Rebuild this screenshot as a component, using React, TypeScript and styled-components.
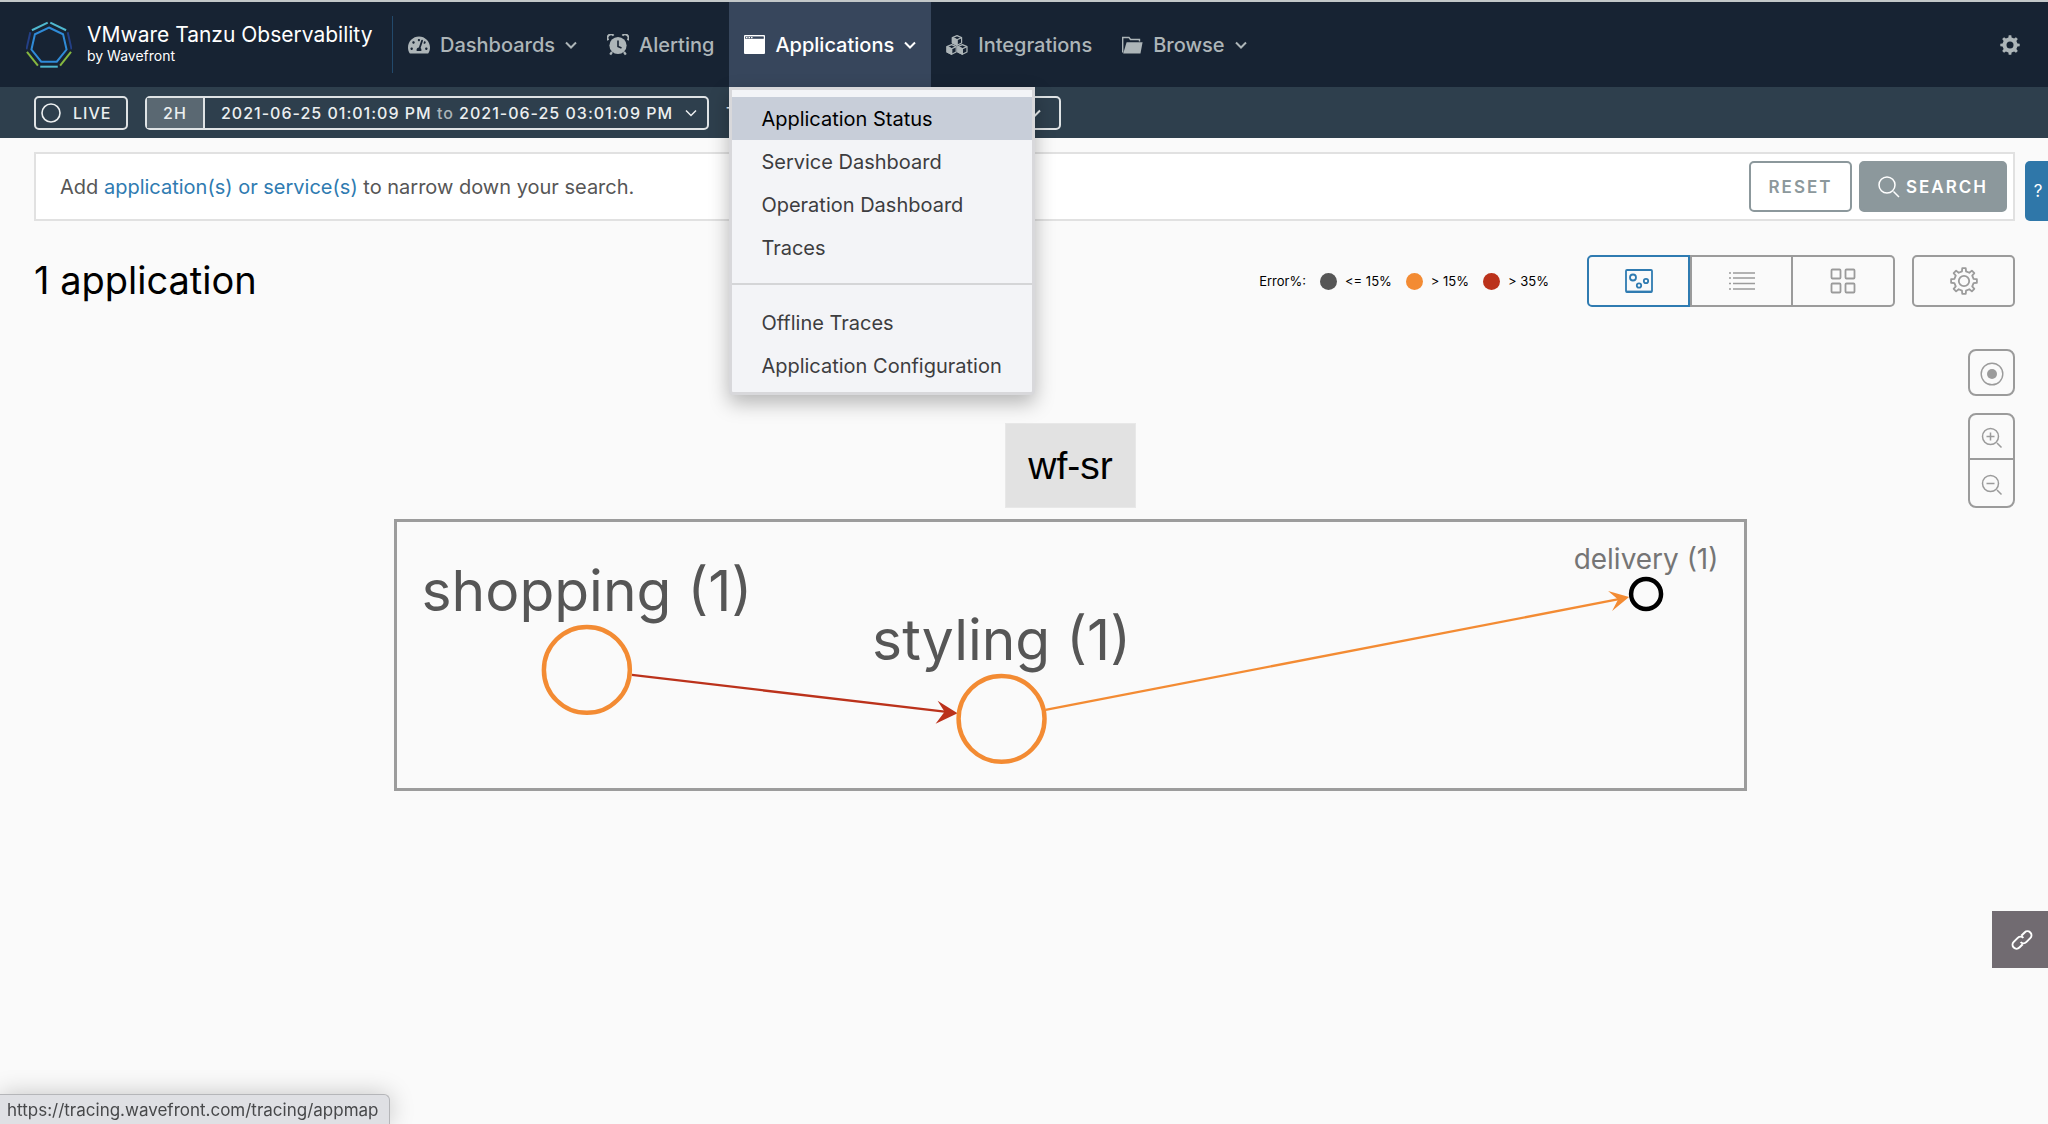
import React from "react";
import styled, { createGlobalStyle, css } from "styled-components";
import { FaTachometerAlt } from "react-icons/fa";

const GlobalStyle = createGlobalStyle`
  *, *::before, *::after { box-sizing: border-box; }
  body {
    margin: 0;
    background: #fafafa;
    color: #565656;
    font-family: Inter, "Open Sans", "Liberation Sans", sans-serif;
    font-size: 20px;
    line-height: 24px;
  }
  button, select {
    font: inherit;
    letter-spacing: inherit;
    color: inherit;
    background: none;
    margin: 0;
    padding: 0;
    cursor: pointer;
  }
  a { text-decoration: none; }
  svg { display: block; flex: none; }
  h1, p, ul { margin: 0; padding: 0; }
`;

const Page = styled.div`
  min-height: 100vh;
  display: flex;
  flex-direction: column;
`;

const Header = styled.header`
  display: flex;
  align-items: stretch;
  height: 87px;
  padding: 0 28px 0 26px;
  background: #172333;
  border-top: 2px solid #c3c8c9;
`;

const Brand = styled.a`
  display: flex;
  align-items: center;
  gap: 15px;
  width: 367px;
  height: 57px;
  margin: 14px 0;
  border-right: 1px solid #22496b;
  color: #fff;
`;

const BrandText = styled.span`
  display: flex;
  flex-direction: column;
  font-size: 21px;
  line-height: 22px;
  white-space: nowrap;
`;

const BrandSub = styled.small`
  font-size: 14px;
  line-height: 20px;
`;

const Nav = styled.nav`
  display: flex;
  flex: 1;
`;

const NavSlot = styled.div`
  position: relative;
  display: flex;
`;

const NavButton = styled.button<{ $active?: boolean }>`
  display: flex;
  align-items: center;
  gap: 10px;
  padding: 0 15px;
  border: 0;
  font-weight: 500;
  color: ${(p) => (p.$active ? "#fff" : "#adb5b8")};
  background: ${(p) => (p.$active ? "#37465c" : "transparent")};
`;

const IconButton = styled.button`
  border: 0;
  color: #adb5b8;
`;

const Menu = styled.ul`
  position: absolute;
  top: 100%;
  left: 0;
  z-index: 10;
  width: 306px;
  padding: 7px 0 5px;
  list-style: none;
  background: #f3f4f7;
  border: 3px solid #d8d8db;
  border-radius: 0 0 4px 4px;
  box-shadow: 0 8px 20px rgba(0, 0, 0, 0.28);
`;

const MenuLink = styled.a<{ $active?: boolean }>`
  display: block;
  padding: 10px 29px 9px;
  white-space: nowrap;
  color: ${(p) => (p.$active ? "#000" : "#3d3d3f")};
  background: ${(p) => (p.$active ? "#c8ced9" : "transparent")};
`;

const MenuRule = styled.li`
  height: 2px;
  margin: 14px 0 16px;
  background: #d4d5d7;
`;

const TimeBar = styled.div`
  display: flex;
  align-items: center;
  gap: 17px;
  height: 51px;
  padding: 0 34px;
  background: #2e3f4d;
  color: #eceff0;
  font-size: 16px;
  font-weight: 500;
  letter-spacing: 1px;
`;

const outlined = css`
  height: 34px;
  border: 2px solid #dfe3e5;
  border-radius: 5px;
`;

const LiveButton = styled.button`
  ${outlined}
  display: flex;
  align-items: center;
  gap: 12px;
  width: 94px;
  padding: 0 5px;
`;

const RangeGroup = styled.div`
  ${outlined}
  display: flex;
`;

const Preset = styled.button`
  width: 58px;
  border: 0;
  border-right: 2px solid #dfe3e5;
  background: #5a6872;
`;

const RangeButton = styled.button`
  display: flex;
  align-items: center;
  justify-content: space-between;
  width: 502px;
  padding: 0 10px 0 16px;
  border: 0;
  white-space: nowrap;
`;

const To = styled.span`
  color: #aab4b9;
`;

const ZoneLabel = styled.label`
  display: flex;
  align-items: center;
  gap: 16px;
`;

const SelectBox = styled.span`
  ${outlined}
  display: flex;
  align-items: center;
  width: 308px;
  padding-right: 18px;
`;

const Select = styled.select`
  flex: 1;
  appearance: none;
  border: 0;
`;

const Main = styled.main`
  display: flex;
  flex-direction: column;
  padding: 14px 33px 0 34px;
`;

const SearchPanel = styled.section`
  display: flex;
  align-items: center;
  gap: 7px;
  height: 69px;
  padding: 0 6px 0 24px;
  background: #fff;
  border: 2px solid #e1e1e1;
`;

const Prompt = styled.p`
  flex: 1;
  a { color: #2f7bb1; }
`;

const ActionButton = styled.button<{ $filled?: boolean }>`
  display: flex;
  align-items: center;
  justify-content: center;
  gap: 6px;
  width: ${(p) => (p.$filled ? 148 : 103)}px;
  height: 51px;
  border: 2px solid #8c989c;
  border-radius: 5px;
  font-size: 17px;
  font-weight: 600;
  letter-spacing: 2px;
  color: ${(p) => (p.$filled ? "#fff" : "#8c989c")};
  background: ${(p) => (p.$filled ? "#8c989c" : "#fff")};
`;

const TitleRow = styled.div`
  display: flex;
  align-items: center;
  height: 52px;
  margin-top: 34px;
`;

const Title = styled.h1`
  flex: 1;
  padding-bottom: 2px;
  font-size: 38px;
  line-height: 44px;
  font-weight: 400;
  color: #000;
`;

const Legend = styled.div`
  display: flex;
  align-items: center;
  gap: 14px;
  margin-right: 38px;
  font-size: 13px;
  color: #000;
`;

const LegendItem = styled.span`
  display: flex;
  align-items: center;
  gap: 8px;
`;

const Dot = styled.i<{ $color: string }>`
  width: 17px;
  height: 17px;
  border-radius: 50%;
  background: ${(p) => p.$color};
`;

const ViewGroup = styled.div`
  display: flex;
  margin-right: 17px;
`;

const ViewButton = styled.button<{ $active?: boolean }>`
  display: flex;
  align-items: center;
  justify-content: center;
  width: 103px;
  height: 52px;
  border: 2px solid ${(p) => (p.$active ? "#2f7bb1" : "#9b9b9b")};
  color: ${(p) => (p.$active ? "#2f7bb1" : "#9b9b9b")};
  border-radius: 5px;
  ${ViewGroup} & { border-radius: 0; }
  ${ViewGroup} &:first-child { border-radius: 5px 0 0 5px; }
  ${ViewGroup} &:last-child { margin-left: -1px; border-radius: 0 5px 5px 0; }
  ${ViewGroup} & + & { border-left-width: 0; }
  ${ViewGroup} & + & + & { border-left-width: 2px; }
`;

const Stage = styled.section`
  display: flex;
  align-items: flex-start;
  margin-top: 42px;
`;

const AppGroup = styled.div`
  flex: 1;
  display: flex;
  flex-direction: column;
  align-items: center;
  gap: 11px;
  margin: 74px 221px 0 360px;
`;

const AppName = styled.div`
  padding: 22px 22px 21px;
  border: 1px solid #e8e8e8;
  background: #e2e2e2;
  color: #000;
  font-family: "Liberation Sans", Arial, sans-serif;
  font-size: 39px;
  line-height: 40px;
`;

const ServiceMap = styled.div`
  align-self: stretch;
  border: 3px solid #9c9c9c;
  svg { width: 100%; height: auto; }
`;

const ZoomTools = styled.div`
  display: flex;
  flex-direction: column;
  gap: 17px;
`;

const ToolGroup = styled.div`
  border: 2px solid #9b9b9b;
  border-radius: 8px;
`;

const ToolButton = styled.button`
  display: flex;
  align-items: center;
  justify-content: center;
  width: 43px;
  height: 43px;
  padding-top: 3px;
  border: 0;
  color: #9b9b9b;
  & + & { height: 48px; border-top: 2px solid #9b9b9b; }
`;

const SideTab = styled.button<{ $link?: boolean }>`
  position: fixed;
  right: 0;
  top: ${(p) => (p.$link ? 911 : 161)}px;
  width: ${(p) => (p.$link ? 56 : 23)}px;
  height: ${(p) => (p.$link ? 57 : 60)}px;
  display: flex;
  align-items: center;
  justify-content: center;
  padding-left: 3px;
  border: 0;
  border-radius: ${(p) => (p.$link ? "0" : "5px 0 0 5px")};
  font-size: 17px;
  color: #fff;
  background: ${(p) => (p.$link ? "#716b71" : "#2f77a9")};
`;

const StatusBar = styled.div`
  position: fixed;
  left: 0;
  bottom: 0;
  height: 30px;
  padding: 3px 10px 3px 7px;
  border: 1px solid #b5b6b9;
  border-left: 0;
  border-bottom: 0;
  border-radius: 0 6px 0 0;
  background: #dfe0e4;
  color: #47484a;
  font-size: 17px;
  box-shadow: 0 0 24px rgba(0, 0, 0, 0.22);
`;

const Chevron = ({ weight = 2 }: { weight?: number }) => (
  <svg width="12" height="12" viewBox="0 0 12 12" fill="none" stroke="currentColor" strokeWidth={weight}>
    <path d="M1 3.5 L6 8.5 L11 3.5" />
  </svg>
);

const heptagon = (cx: number, cy: number, r: number) =>
  Array.from({ length: 7 }, (_, i) => {
    const a = -Math.PI / 2 + (i * 2 * Math.PI) / 7;
    return [cx + r * Math.cos(a), cy + r * Math.sin(a)];
  });

const Logo = () => {
  const outer = heptagon(23, 24.5, 23.5);
  const colors = ["#4fb8cf", "#233f86", "#86b840", "#4fb8cf", "#86b840", "#233f86", "#4fb8cf"];
  return (
    <svg width="46" height="48" viewBox="0 0 46 48" fill="none" strokeWidth="2">
      <polygon points={heptagon(23, 24.5, 18).map((p) => p.join(",")).join(" ")} stroke="#2f8bd8" />
      {outer.map((p, i) => {
        const q = outer[(i + 1) % 7];
        const at = (t: number) => [p[0] + (q[0] - p[0]) * t, p[1] + (q[1] - p[1]) * t];
        const [a, b] = [at(0.07), at(0.93)];
        return <line key={i} x1={a[0]} y1={a[1]} x2={b[0]} y2={b[1]} stroke={colors[i]} />;
      })}
    </svg>
  );
};

const AlarmIcon = () => (
  <svg width="22" height="22" viewBox="0 0 22 22" fill="none" stroke="currentColor">
    <circle cx="11" cy="11.5" r="8.6" fill="currentColor" stroke="none" />
    <path d="M1.4 6.2 A3.4 3.4 0 0 1 6.6 1.6 M15.4 1.6 A3.4 3.4 0 0 1 20.6 6.2" strokeWidth="2" />
    <path d="M5 18 L3.2 20.6 M17 18 L18.800 20.6" strokeWidth="2.2" />
    <path d="M11 6.5 V12.5 L14.5 14" stroke="#172333" strokeWidth="1.6" />
  </svg>
);

const WindowIcon = () => (
  <svg width="21" height="19" viewBox="0 0 21 19" fill="currentColor">
    <path d="M1 0 H20 Q21 0 21 1 V18 Q21 19 20 19 H1 Q0 19 0 18 V1 Q0 0 1 0 Z" />
    <path d="M1.2 1.4 H19.8 V3.8 H1.2 Z" fill="#37465c" />
    <path d="M2 1.9 H3.500 V3.300 H2 Z M4.500 1.9 H6 V3.300 H4.500 Z M7 1.9 H8.500 V3.300 H7 Z" />
  </svg>
);

const CubesIcon = () => (
  <svg width="22" height="20" viewBox="0 0 22 20" stroke="currentColor" strokeWidth="1.2" strokeLinejoin="round">
    {[[11, 0.6], [5.6, 9.6], [16.4, 9.6]].map(([x, y]) => (
      <g key={x} transform={`translate(${x} ${y})`}>
        <path d="M0 0 L4.6 2 V7.4 L0 9.6 L-4.6 7.4 V2 Z" fill="#172333" />
        <path d="M-4.6 2 L0 4.200 V9.600 L-4.600 7.400 Z" fill="currentColor" />
        <path d="M-4.600 2 L0 4.200 L4.600 2 M0 4.200 V9.600" fill="none" />
      </g>
    ))}
  </svg>
);

const FolderIcon = () => (
  <svg width="21" height="18" viewBox="0 0 21 18" fill="currentColor">
    <path d="M0.700 16.500 V1.500 H7 L8.500 3.500 H17.500 V5.500" fill="none" stroke="currentColor" strokeWidth="1.400" />
    <path d="M4.600 6.200 H20.600 L18.500 17.600 H1.200 Z" />
  </svg>
);

const gearPath = (c: number, r1: number, r2: number, teeth: number) => {
  const pts: string[] = [];
  const step = (2 * Math.PI) / teeth;
  for (let i = 0; i < teeth; i++) {
    const base = i * step - Math.PI / 2;
    [[-0.27, r2], [-0.17, r1], [0.17, r1], [0.27, r2]].forEach(([t, r]) => {
      const a = base + t * step;
      pts.push(`${(c + r * Math.cos(a)).toFixed(2)} ${(c + r * Math.sin(a)).toFixed(2)}`);
    });
  }
  return `M${pts.join(" L")} Z`;
};

const SolidGear = () => (
  <svg width="20" height="20" viewBox="0 0 20 20" fill="none">
    <path d={gearPath(10, 9.8, 7.6, 8)} fill="currentColor" />
    <circle cx="10" cy="10" r="3.5" fill="#172333" />
  </svg>
);

const OutlineGear = () => (
  <svg width="28" height="28" viewBox="0 0 28 28" fill="none" stroke="currentColor" strokeWidth="1.8" strokeLinejoin="round">
    <path d={gearPath(14, 13, 9.8, 8)} />
    <circle cx="14" cy="14" r="5.2" />
  </svg>
);

const SearchIcon = () => (
  <svg width="22" height="22" viewBox="0 0 22 22" fill="none" stroke="currentColor" strokeWidth="1.5">
    <circle cx="9" cy="9" r="8" />
    <path d="M15.5 15.5 L21 21" />
  </svg>
);

const MapIcon = () => (
  <svg width="28" height="24" viewBox="0 0 28 24" fill="none" stroke="currentColor" strokeWidth="1.8">
    <rect x="1" y="1" width="26" height="22" rx="1" />
    <path d="M1 22.5 H27" />
    <circle cx="8" cy="8.5" r="3" />
    <circle cx="14" cy="16.5" r="2.2" />
    <circle cx="21" cy="12" r="2.2" />
  </svg>
);

const ListIcon = () => (
  <svg width="26" height="20" viewBox="0 0 26 20" stroke="currentColor" strokeWidth="1.6">
    {[2, 7, 12.5, 18].map((y) => (
      <path key={y} d={`M0 ${y} H2 M4 ${y} H26`} />
    ))}
  </svg>
);

const GridIcon = () => (
  <svg width="26" height="26" viewBox="0 0 26 26" fill="none" stroke="currentColor" strokeWidth="1.8">
    {[1.5, 15.5].map((x) =>
      [1.5, 15.5].map((y) => <rect key={`${x}-${y}`} x={x} y={y} width="9" height="9" rx="1" />)
    )}
  </svg>
);

const TargetIcon = () => (
  <svg width="24" height="24" viewBox="0 0 24 24" fill="none" stroke="currentColor" strokeWidth="1.4">
    <circle cx="12" cy="12" r="10.8" />
    <circle cx="12" cy="12" r="5" fill="currentColor" stroke="none" />
  </svg>
);

const Magnifier = ({ plus }: { plus?: boolean }) => (
  <svg width="22" height="22" viewBox="0 0 22 22" fill="none" stroke="currentColor" strokeWidth="1.5">
    <circle cx="9.5" cy="9.5" r="8" />
    <path d={`M16 16 L20.5 20.5 M5.5 9.5 H13.5${plus ? " M9.5 5.5 V13.5" : ""}`} />
  </svg>
);

const LinkIcon = () => (
  <svg width="24" height="24" viewBox="0 0 24 24" fill="none" stroke="currentColor" strokeWidth="2">
    <g transform="rotate(-45 12 12)">
      <path d="M9.5 15.5 H4.800 A4 4 0 0 1 4.800 7.500 H10.500 A4 4 0 0 1 14.500 11.500" />
      <path d="M14.500 8.500 H19.200 A4 4 0 0 1 19.200 16.500 H13.500 A4 4 0 0 1 9.500 12.500" />
    </g>
  </svg>
);

const navItems = [
  { label: "Dashboards", icon: <FaTachometerAlt size={22} />, arrow: true },
  { label: "Alerting", icon: <AlarmIcon /> },
  { label: "Applications", icon: <WindowIcon />, arrow: true, active: true },
  { label: "Integrations", icon: <CubesIcon /> },
  { label: "Browse", icon: <FolderIcon />, arrow: true },
];

const menuTop = ["Application Status", "Service Dashboard", "Operation Dashboard", "Traces"];
const menuBottom = ["Offline Traces", "Application Configuration"];

const legend = [
  { color: "#565656", label: "<= 15%" },
  { color: "#f38b33", label: "> 15%" },
  { color: "#bb321b", label: "> 35%" },
];

const nodes = [
  { name: "shopping (1)", x: 190, y: 148, r: 43, stroke: "#f38b33", size: 57, textY: 89, fill: "#565656" },
  { name: "styling (1)", x: 605, y: 197, r: 43, stroke: "#f38b33", size: 57, textY: 138, fill: "#565656" },
  { name: "delivery (1)", x: 1250, y: 72, r: 15, stroke: "#000", size: 28, textY: 47, fill: "#757575" },
];

export default function App() {
  return (
    <Page>
      <GlobalStyle />
      <Header>
        <Brand href="#">
          <Logo />
          <BrandText>
            VMware Tanzu Observability
            <BrandSub>by Wavefront</BrandSub>
          </BrandText>
        </Brand>
        <Nav>
          {navItems.map((item) => (
            <NavSlot key={item.label}>
              <NavButton $active={item.active}>
                {item.icon}
                {item.label}
                {item.arrow && <Chevron />}
              </NavButton>
              {item.active && (
                <Menu>
                  {menuTop.map((label, i) => (
                    <li key={label}>
                      <MenuLink href="#" $active={i === 0}>{label}</MenuLink>
                    </li>
                  ))}
                  <MenuRule />
                  {menuBottom.map((label) => (
                    <li key={label}>
                      <MenuLink href="#">{label}</MenuLink>
                    </li>
                  ))}
                </Menu>
              )}
            </NavSlot>
          ))}
        </Nav>
        <IconButton aria-label="Settings"><SolidGear /></IconButton>
      </Header>

      <TimeBar>
        <LiveButton>
          <svg width="20" height="20" viewBox="0 0 20 20" fill="none" stroke="currentColor" strokeWidth="1.6">
            <circle cx="10" cy="10" r="9" />
          </svg>
          LIVE
        </LiveButton>
        <RangeGroup>
          <Preset>2H</Preset>
          <RangeButton>
            <span>2021-06-25 01:01:09 PM <To>to</To> 2021-06-25 03:01:09 PM</span>
            <Chevron weight={1.5} />
          </RangeButton>
        </RangeGroup>
        <ZoneLabel>
          T
          <SelectBox>
            <Select aria-label="Time zone" />
            <Chevron />
          </SelectBox>
        </ZoneLabel>
      </TimeBar>

      <Main>
        <SearchPanel>
          <Prompt>
            Add <a href="#">application(s) or service(s)</a> to narrow down your search.
          </Prompt>
          <ActionButton>RESET</ActionButton>
          <ActionButton $filled><SearchIcon />SEARCH</ActionButton>
        </SearchPanel>

        <TitleRow>
          <Title>1 application</Title>
          <Legend>
            Error%:
            {legend.map((item) => (
              <LegendItem key={item.label}>
                <Dot $color={item.color} />
                {item.label}
              </LegendItem>
            ))}
          </Legend>
          <ViewGroup>
            <ViewButton $active aria-label="Map view"><MapIcon /></ViewButton>
            <ViewButton aria-label="List view"><ListIcon /></ViewButton>
            <ViewButton aria-label="Grid view"><GridIcon /></ViewButton>
          </ViewGroup>
          <ViewButton aria-label="View settings"><OutlineGear /></ViewButton>
        </TitleRow>

        <Stage>
          <AppGroup>
            <AppName>wf-sr</AppName>
            <ServiceMap>
              <svg viewBox="0 0 1348 266" fill="none">
                <path d="M235 153 L550 190" stroke="#bb321b" strokeWidth="2.4" />
                <path d="M561 191.5 L541 179 L548 190 L539 202 Z" fill="#bb321b" />
                <path d="M649 188 L1224 77" stroke="#f38b33" strokeWidth="2.4" />
                <path d="M1233 75 L1212 69 L1222 77.5 L1216 89 Z" fill="#f38b33" />
                {nodes.map((n) => (
                  <g key={n.name}>
                    <circle cx={n.x} cy={n.y} r={n.r} stroke={n.stroke} strokeWidth="4.5" />
                    <text x={n.x} y={n.textY} fontSize={n.size} fill={n.fill} textAnchor="middle">{n.name}</text>
                  </g>
                ))}
              </svg>
            </ServiceMap>
          </AppGroup>
          <ZoomTools>
            <ToolGroup>
              <ToolButton aria-label="Center map"><TargetIcon /></ToolButton>
            </ToolGroup>
            <ToolGroup>
              <ToolButton aria-label="Zoom in"><Magnifier plus /></ToolButton>
              <ToolButton aria-label="Zoom out"><Magnifier /></ToolButton>
            </ToolGroup>
          </ZoomTools>
        </Stage>
      </Main>

      <SideTab>?</SideTab>
      <SideTab $link aria-label="Copy link"><LinkIcon /></SideTab>
      <StatusBar>https://tracing.wavefront.com/tracing/appmap</StatusBar>
    </Page>
  );
}
